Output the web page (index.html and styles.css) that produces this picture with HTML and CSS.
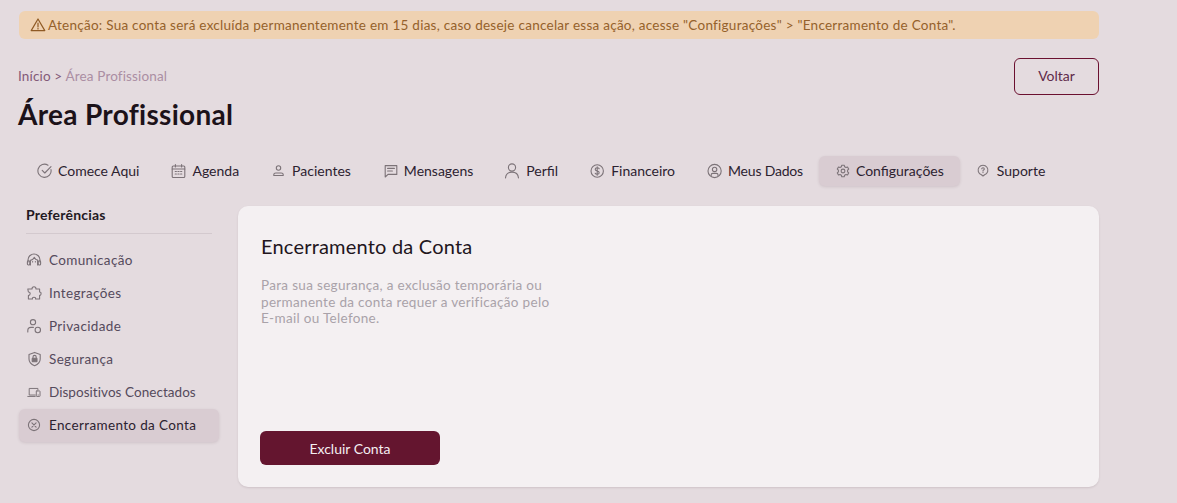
FILE: index.html
```html
<!DOCTYPE html>
<html lang="en">
<head>
    <meta charset="UTF-8">
    <meta name="viewport" content="width=device-width, initial-scale=1.0">
    <title>Área Profissional - Encerramento da Conta</title>
    <link rel="stylesheet" href="styles.css">
</head>
<body>
    <div class="container">
        <div class="alert">
            <svg class="icon alert-icon" viewBox="0 0 16 16"><path d="M8 2 L14.8 13.6 H1.2 Z"/><path d="M8 6.2 V9.8 M8 11.4 V11.9"/></svg>
            <span>Atenção: Sua conta será excluída permanentemente em 15 dias, caso deseje cancelar essa ação, acesse "Configurações" &gt; "Encerramento de Conta".</span>
        </div>

        <header class="page-header">
            <div class="breadcrumb"><a href="#" class="crumb-link">Início</a> &gt; <span class="crumb-current">Área Profissional</span></div>
            <button class="button back-button">Voltar</button>
        </header>
        <h1>Área Profissional</h1>

        <nav class="tabs">
            <a href="#" class="tab"><svg class="icon" viewBox="0 0 16 16"><path d="M14 6.6 A6.6 6.6 0 1 1 11 2.2"/><path d="M5.2 7.4 L7.8 10 L14 3.6"/></svg><span>Comece Aqui</span></a>
            <a href="#" class="tab"><svg class="icon" viewBox="0 0 16 16"><rect x="1.2" y="3" width="12.6" height="11.5" rx="1"/><path d="M1.2 6 H13.8 M4.4 1.5 V4 M10.6 1.5 V4 M4.2 8.5 H5.4 M6.9 8.5 H8.1 M9.6 8.5 H10.8 M4.2 11 H5.4 M6.9 11 H8.1 M9.6 11 H10.8"/></svg><span>Agenda</span></a>
            <a href="#" class="tab"><svg class="icon" viewBox="0 0 16 16"><circle cx="7.5" cy="5" r="2.2"/><path d="M2.8 12.5 V11.5 Q2.8 10 4.8 10 H10.2 Q12.2 10 12.2 11.5 V12.5 Z"/></svg><span>Pacientes</span></a>
            <a href="#" class="tab"><svg class="icon" viewBox="0 0 16 16"><path d="M2.2 2.6 H13.8 V11.4 H5 L2.2 14 Z"/><path d="M4.6 5.4 H11.4 M4.6 8 H9.4"/></svg><span>Mensagens</span></a>
            <a href="#" class="tab"><svg class="icon" viewBox="0 0 16 16"><circle cx="7" cy="4.5" r="3.6"/><path d="M0.5 15 C0.9 11 3.4 9.1 7 9.1 C10.6 9.1 13.1 11 13.5 15"/></svg><span>Perfil</span></a>
            <a href="#" class="tab"><svg class="icon" viewBox="0.8 0 16 16"><circle cx="8" cy="8" r="6.2"/><path d="M10 5.8 Q9.6 4.8 8 4.8 Q6 4.8 6 6.3 Q6 7.6 8 8 Q10 8.4 10 9.7 Q10 11.2 8 11.2 Q6.4 11.2 6 10.2 M8 3.8 V12.2"/></svg><span>Financeiro</span></a>
            <a href="#" class="tab tab-tight"><svg class="icon" viewBox="0.4 0 16 16"><circle cx="8" cy="8" r="6.6"/><circle cx="8" cy="6.4" r="2.2"/><path d="M4.6 12.6 V11.8 Q4.6 10.4 6.2 10.4 H9.8 Q11.4 10.4 11.4 11.8 V12.6"/></svg><span>Meus Dados</span></a>
            <a href="#" class="tab tab-active"><svg class="icon" viewBox="0 0 16 16"><circle cx="8" cy="8" r="1.9"/><path d="M6.8 2.2 H9.2 L9.6 3.7 L11 4.5 L12.5 4 L13.7 6.1 L12.6 7.2 V8.8 L13.7 9.9 L12.5 12 L11 11.5 L9.6 12.3 L9.2 13.8 H6.8 L6.4 12.3 L5 11.5 L3.5 12 L2.3 9.9 L3.4 8.8 V7.2 L2.3 6.1 L3.5 4 L5 4.5 L6.4 3.7 Z"/></svg><span>Configurações</span></a>
            <a href="#" class="tab"><svg class="icon" viewBox="1 0 16 16"><path d="M8 13 L6.4 11.8 A4.9 4.9 0 1 1 9.6 11.8 Z"/><path d="M6.7 5.8 Q6.9 4.7 8 4.7 Q9.3 4.7 9.3 5.9 Q9.3 6.7 8.4 7.1 Q8 7.3 8 8 M8 9.2 V9.6"/></svg><span>Suporte</span></a>
        </nav>

        <div class="content">
            <aside class="sidebar">
                <h2>Preferências</h2>
                <ul class="side-menu">
                    <li><a href="#" class="side-item"><svg class="icon" viewBox="0 0 16 16"><path d="M2 10 V8 A6 6 0 0 1 14 8 V10"/><path d="M4.4 13 V8.4 Q6.8 8 8.4 5.4 Q9.6 7.8 11.6 8 V13"/><rect x="1.4" y="8.8" width="2.4" height="4.2" rx="1"/><rect x="12.2" y="8.8" width="2.4" height="4.2" rx="1"/><path d="M6.6 9.6 V10 M9.4 9.6 V10"/></svg>Comunicação</a></li>
                    <li><a href="#" class="side-item"><svg class="icon" viewBox="0 0 16 16"><path d="M6 4 Q6 1.8 8 1.8 Q10 1.8 10 4 H13.6 V7 Q15.4 7 15 9 Q14.8 10.6 13.6 10.4 V14 H9.6 Q9.8 12.2 8 12.2 Q6.2 12.2 6.4 14 H2.4 V10.6 Q4.2 10.4 4.2 8.6 Q4.2 7 2.4 7 L1.8 4 Z"/></svg>Integrações</a></li>
                    <li><a href="#" class="side-item"><svg class="icon" viewBox="0 0 16 16"><circle cx="7" cy="4.2" r="2.6"/><path d="M1.8 14 V12.4 Q1.8 9.4 5 9.4 H7.4"/><circle cx="11.8" cy="12" r="2.7"/></svg>Privacidade</a></li>
                    <li><a href="#" class="side-item"><svg class="icon" viewBox="-0.6 0 16 16"><path d="M8 1.4 L13.6 3.4 V8 Q13.6 12.4 8 14.8 Q2.4 12.4 2.4 8 V3.4 Z"/><rect class="fill" x="5.6" y="7.2" width="4.8" height="3.6" rx=".5"/><path d="M6.4 7.2 V6 A1.6 1.6 0 0 1 9.6 6 V7.2"/></svg>Segurança</a></li>
                    <li><a href="#" class="side-item side-tight"><svg class="icon" viewBox="-1 -1 18 18"><path d="M9.4 11.4 H2.6 V4 H12.4 V5.6 M1 13 H9.4"/><rect x="10.6" y="6.8" width="4.2" height="6.2" rx=".6"/><path d="M12.7 11.2 V11.6"/></svg>Dispositivos Conectados</a></li>
                    <li><a href="#" class="side-item side-active"><svg class="icon" viewBox="0 0 16 16"><circle cx="8" cy="8" r="5.6"/><path d="M5.9 5.9 L10.1 10.1 M10.1 5.9 L5.9 10.1"/></svg>Encerramento da Conta</a></li>
                </ul>
            </aside>

            <main class="card">
                <h3>Encerramento da Conta</h3>
                <p class="card-text">Para sua segurança, a exclusão temporária ou permanente da conta requer a verificação pelo E-mail ou Telefone.</p>
                <button class="button delete-button">Excluir Conta</button>
            </main>
        </div>
    </div>
</body>
</html>
```

FILE: styles.css
```css
* {
    margin: 0;
    padding: 0;
    box-sizing: border-box;
    font-family: Lato, "Open Sans", sans-serif;
}

body {
    background-color: #e4dbdf;
    height: 503px;
    overflow: hidden;
}

a {
    text-decoration: none;
    color: inherit;
}

.container {
    width: 1080px;
    margin-left: 19px;
    padding-top: 11px;
}

.icon {
    width: 16px;
    height: 16px;
    flex-shrink: 0;
    fill: none;
    stroke: #7c7378;
    stroke-width: 1.1;
    stroke-linejoin: round;
    stroke-linecap: round;
}

.icon .fill {
    fill: #7c7378;
}

.alert {
    display: flex;
    align-items: center;
    gap: 2px;
    height: 28px;
    padding-left: 11px;
    background-color: #efd2b2;
    border-radius: 6px;
    color: #95612b;
    font-size: 13.5px;
    letter-spacing: 0.26px;
}

.alert-icon {
    stroke: #8f5a24;
    stroke-width: 1.2;
}

.page-header {
    display: flex;
    justify-content: space-between;
    align-items: center;
    margin-top: 19px;
}

.breadcrumb {
    margin-left: -1px;
    padding-bottom: 1px;
    font-size: 13.5px;
    letter-spacing: 0.15px;
    color: #835a78;
}

.crumb-current {
    color: #ab8ea3;
}

.button {
    border-radius: 6px;
    cursor: pointer;
    font-size: 14px;
}

.back-button {
    width: 85px;
    height: 37px;
    padding-bottom: 2px;
    background: transparent;
    border: 1px solid #6b1030;
    color: #5f2a4a;
}

h1 {
    margin-top: 1px;
    margin-left: -1px;
    font-size: 28px;
    line-height: 36px;
    font-weight: 700;
    letter-spacing: 0.3px;
    color: #1c1219;
}

.tabs {
    display: flex;
    margin-top: 24px;
    margin-left: 2px;
    height: 30px;
}

.tab {
    display: flex;
    align-items: center;
    gap: 5px;
    padding: 0 16px 1px 16px;
    border-radius: 6px;
    font-size: 14px;
    color: #2c2230;
    white-space: nowrap;
}

.tab-tight {
    letter-spacing: -0.2px;
}

.tab-active,
.side-active {
    background-color: #d9ccd2;
    box-shadow: 0 1px 3px rgba(90, 60, 75, 0.15);
}

.content {
    display: flex;
    gap: 19px;
    margin-top: 20px;
}

.sidebar {
    width: 200px;
}

.sidebar h2 {
    margin: 0 7px;
    padding-bottom: 9px;
    border-bottom: 1px solid #d3c9ce;
    font-size: 14px;
    line-height: 18px;
    font-weight: 700;
    letter-spacing: 0.2px;
    color: #221822;
}

.side-menu {
    list-style: none;
    margin-top: 10px;
}

.side-item {
    display: flex;
    align-items: center;
    gap: 7px;
    height: 33px;
    padding: 0 0 1px 7px;
    border-radius: 6px;
    font-size: 13.5px;
    letter-spacing: 0.35px;
    color: #554a5c;
}

.side-tight {
    letter-spacing: 0.05px;
}

.side-active {
    color: #2c2230;
}

.card {
    display: flex;
    flex-direction: column;
    align-items: flex-start;
    width: 861px;
    height: 281px;
    padding: 27px 22px 22px 23px;
    background-color: #f4f0f2;
    border-radius: 10px;
    box-shadow: 0 1px 2px rgba(90, 60, 75, 0.15);
}

.card h3 {
    font-size: 20px;
    line-height: 26px;
    font-weight: 400;
    letter-spacing: 0.2px;
    color: #22151d;
}

.card-text {
    width: 295px;
    margin-top: 18px;
    font-size: 13.5px;
    line-height: 16.5px;
    letter-spacing: 0.32px;
    color: #a9a2a9;
}

.delete-button {
    width: 180px;
    height: 34px;
    margin-top: auto;
    margin-left: -1px;
    background-color: #64152f;
    border: none;
    color: #f4eef2;
}
```
